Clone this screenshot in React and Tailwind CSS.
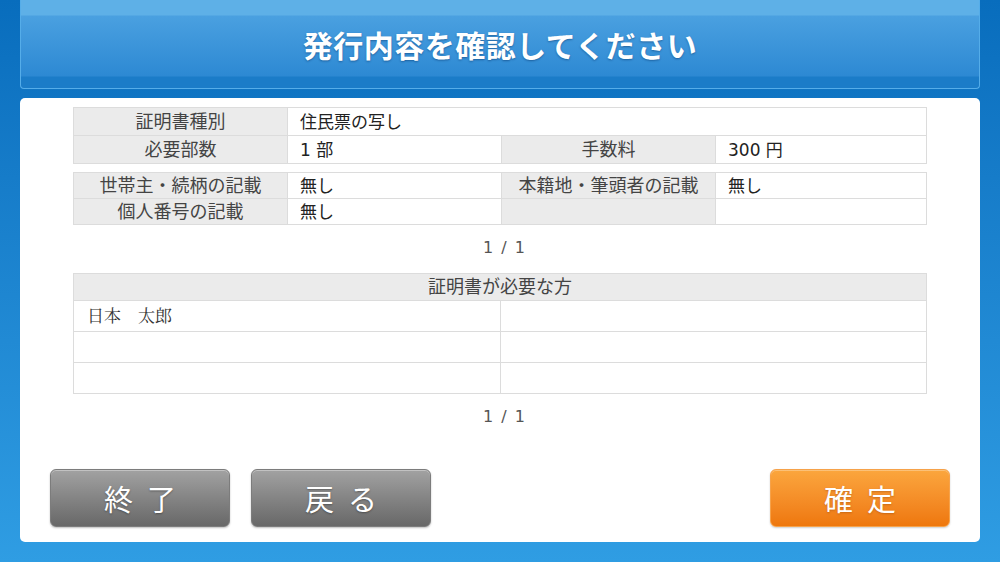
import React from 'react';

const jp = { fontFamily: '"Noto Sans CJK JP", "Noto Sans", sans-serif' };
const num = { fontFamily: '"DejaVu Sans", "Noto Sans CJK JP", sans-serif' };

const Label = ({ children, className = '' }) => (
    <div style={num} className={`bg-[#ebebeb] text-[#444] text-[18px] flex items-center justify-center leading-[22px] ${className}`}>
        {children}
    </div>
);

const Value = ({ children, className = '' }) => (
    <div style={num} className={`bg-white text-[#222] text-[17px] flex items-center pl-[12px] leading-[22px] ${className}`}>
        {children}
    </div>
);

const Pager = () => (
    <div style={num} className="text-center pl-[8px] text-[16px] leading-[20px] text-[#555] [word-spacing:3px]">1 / 1</div>
);

const GrayButton = ({ chars }) => (
    <button className="w-[180px] h-[58px] rounded-[6px] border border-[#7c7c7c] bg-gradient-to-b from-[#a2a2a2] to-[#686868] shadow-[inset_0_1px_0_rgba(255,255,255,0.35),0_1px_2px_rgba(0,0,0,0.25)] flex items-center justify-center gap-[14px] text-white text-[29px] leading-none [text-shadow:0_1px_2px_rgba(0,0,0,0.35)]">
        {chars.map((c) => <span key={c}>{c}</span>)}
    </button>
);

export default function App() {
    return (
        <div style={jp} className="w-[1000px] h-[562px] overflow-hidden bg-gradient-to-b from-[#086dbd] to-[#2f9de3] px-[20px] flex flex-col">
            {/* ヘッダー */}
            <div className="h-[89px] shrink-0 rounded-b-[4px] border border-t-0 border-[#55ade9] bg-[linear-gradient(to_bottom,#5eb0e7_0px,#5eb0e7_15px,#4aa0e0_16px,#2d89d3_76px,#1b7cc8_77px,#1b7cc8_100%)] flex items-center justify-center">
                <h1 className="text-white text-[30px] font-bold leading-none tracking-[0.5px] [text-shadow:0_1px_2px_rgba(0,40,90,0.45)]">
                    発行内容を確認してください
                </h1>
            </div>

            {/* 本文パネル */}
            <div className="mt-[9px] h-[444px] shrink-0 bg-white rounded-[5px] flex flex-col">
                <div className="px-[53px] pt-[9px]">
                    <div className="grid grid-cols-[213px_213px_213px_1fr] grid-rows-[27px_27px] gap-px p-px bg-[#dcdcdc]">
                        <Label>証明書種別</Label>
                        <Value className="col-span-3">住民票の写し</Value>
                        <Label>必要部数</Label>
                        <Value>1 部</Value>
                        <Label>手数料</Label>
                        <Value>300 円</Value>
                    </div>

                    <div className="mt-[8px] grid grid-cols-[213px_213px_213px_1fr] grid-rows-[25px_25px] gap-px p-px bg-[#dcdcdc]">
                        <Label>世帯主・続柄の記載</Label>
                        <Value>無し</Value>
                        <Label>本籍地・筆頭者の記載</Label>
                        <Value>無し</Value>
                        <Label>個人番号の記載</Label>
                        <Value>無し</Value>
                        <Label></Label>
                        <Value></Value>
                    </div>

                    <div className="mt-[13px]">
                        <Pager />
                    </div>

                    <div className="mt-[15px] grid grid-cols-2 grid-rows-[26px_30px_30px_30px] gap-px p-px bg-[#dcdcdc]">
                        <Label className="col-span-2">証明書が必要な方</Label>
                        <div
                            className="bg-white text-[#333] text-[17px] leading-[22px] pl-[13px] pt-[3px]"
                            style={{ fontFamily: '"Noto Serif CJK JP", "Liberation Serif", "Noto Sans CJK JP", serif' }}
                        >
                            日本　太郎
                        </div>
                        <div className="bg-white"></div>
                        <div className="bg-white"></div>
                        <div className="bg-white"></div>
                        <div className="bg-white"></div>
                        <div className="bg-white"></div>
                    </div>

                    <div className="mt-[13px]">
                        <Pager />
                    </div>
                </div>

                {/* ボタン */}
                <div className="mt-auto px-[30px] pb-[15px] flex items-center">
                    <GrayButton chars={['終', '了']} />
                    <div className="ml-[21px]">
                        <GrayButton chars={['戻', 'る']} />
                    </div>
                    <button className="ml-auto w-[180px] h-[58px] rounded-[6px] border border-[#f6a24a] bg-gradient-to-b from-[#fba63d] to-[#ee770b] shadow-[inset_0_1px_0_rgba(255,255,255,0.3),0_1px_2px_rgba(0,0,0,0.2)] flex items-center justify-center gap-[14px] text-white text-[29px] leading-none [text-shadow:0_1px_2px_rgba(120,50,0,0.35)]">
                        <span>確</span>
                        <span>定</span>
                    </button>
                </div>
            </div>
        </div>
    );
}
